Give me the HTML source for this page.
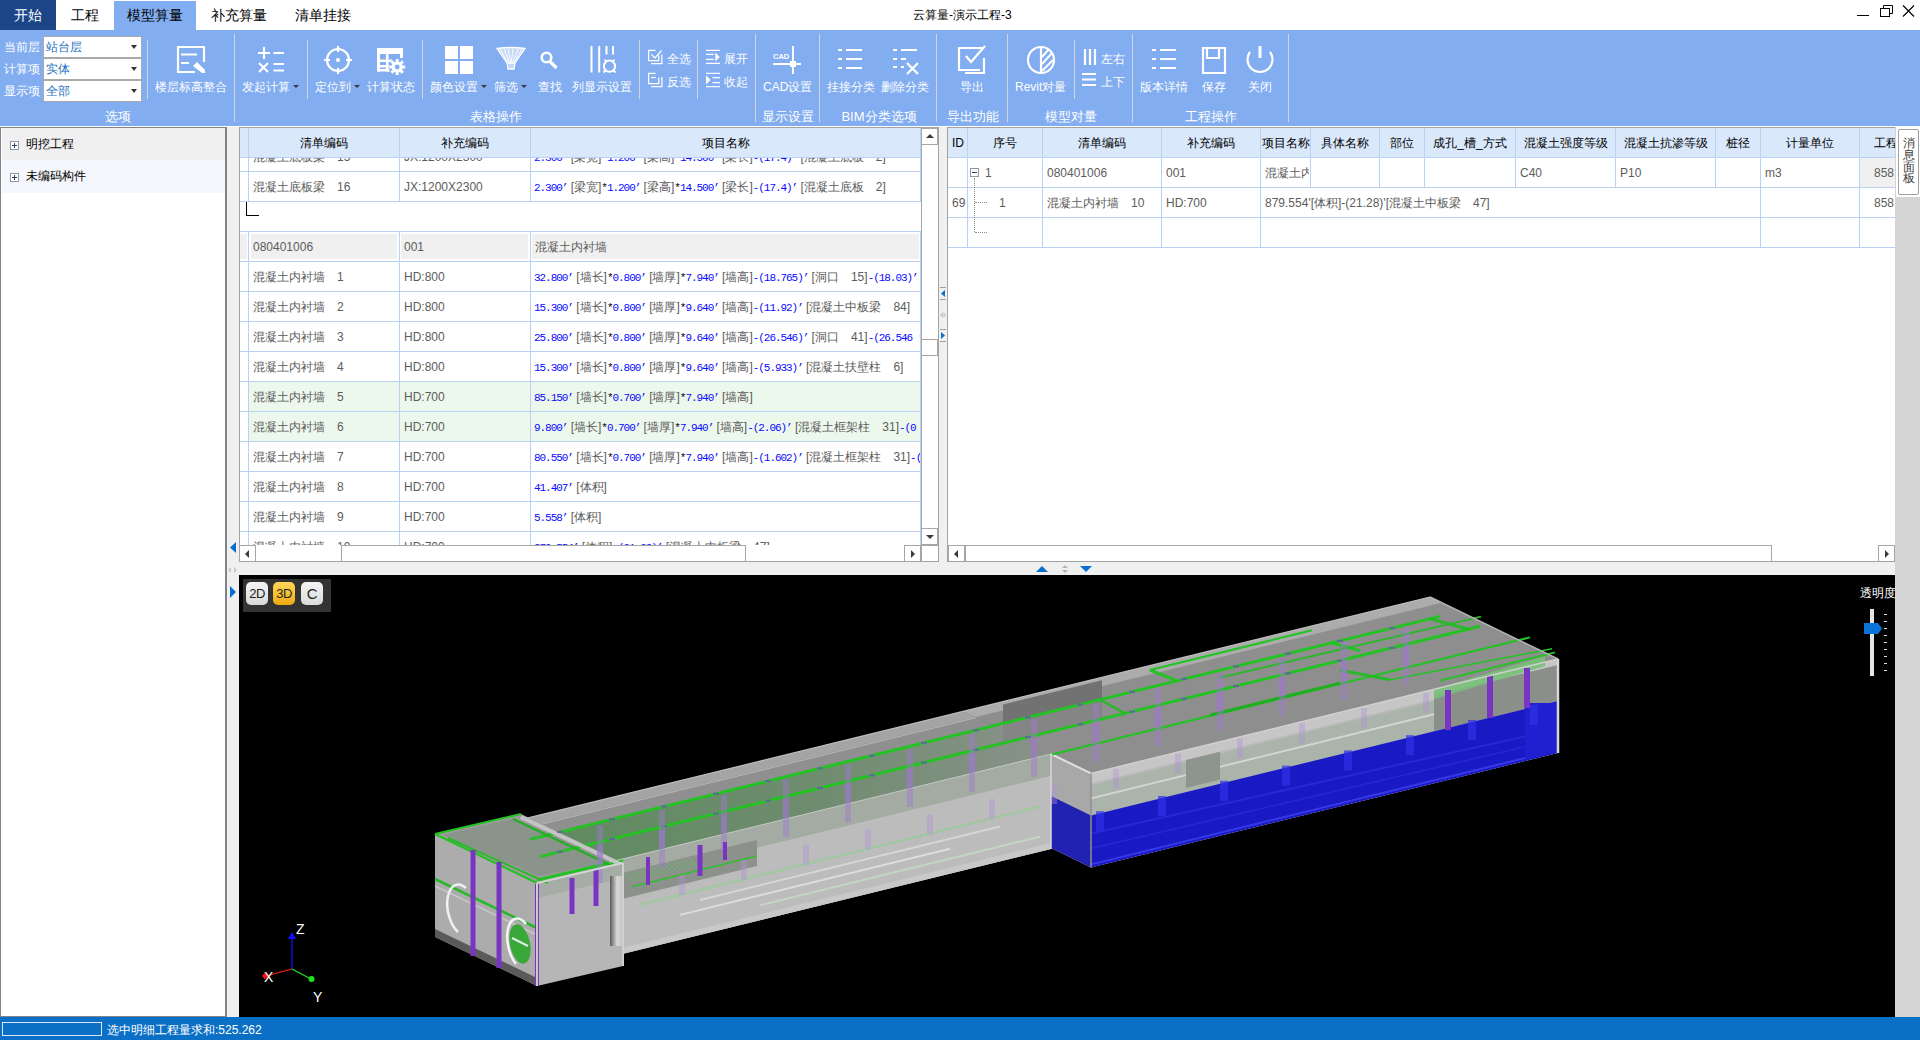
<!DOCTYPE html>
<html><head><meta charset="utf-8">
<style>
*{box-sizing:border-box;margin:0;padding:0}
html,body{width:1920px;height:1040px;overflow:hidden;background:#f0f0f0;font-family:"Liberation Sans",sans-serif;font-size:12px;color:#000}
.a{position:absolute}
.t{position:absolute;white-space:nowrap;line-height:14px}
#tabs{left:0;top:0;width:1920px;height:30px;background:#fff}
#ribbon{left:0;top:30px;width:1920px;height:96px;background:#82adf0}
.wt{color:#fff}
.gsep{position:absolute;width:1px;top:34px;height:88px;background:#d2d6dc}
.ssep{position:absolute;width:1px;top:40px;height:59px;background:#d2d6dc}
.lbl{position:absolute;color:#fff;white-space:nowrap;line-height:14px;top:80px;text-align:center}
.glbl{position:absolute;color:#fff;white-space:nowrap;line-height:14px;top:110px;text-align:center;font-size:13px}
.combo{position:absolute;left:43px;width:99px;height:22px;background:#fff;border:1px solid #a9a9a9;color:#1a6fc0;padding-left:2px;line-height:21px;font-size:12px}
.combo:after{content:"";position:absolute;right:4px;top:8px;border-left:3px solid transparent;border-right:3px solid transparent;border-top:4px solid #333}
.dd{display:inline-block;width:0;height:0;border-left:3px solid transparent;border-right:3px solid transparent;border-top:3px solid #3a3a3a;vertical-align:middle;margin-left:3px;margin-top:-2px}
svg{position:absolute;overflow:visible}

.pbox{position:absolute;width:9px;height:9px;border:1px solid #8f9aa8;background:#fff}
.pbox:before{content:"";position:absolute;left:1px;top:3px;width:5px;height:1px;background:#2d3f5a}
.pbox:after{content:"";position:absolute;left:3px;top:1px;width:1px;height:5px;background:#2d3f5a}
.mbox{position:absolute;width:9px;height:9px;border:1px solid #8f9aa8;background:#fff}
.mbox:before{content:"";position:absolute;left:1px;top:3px;width:5px;height:1px;background:#2d3f5a}

.grid{position:absolute;background:#fff;overflow:hidden}
.hl{position:absolute;height:1px;background:#b9d1f5}
.vl{position:absolute;width:1px;background:#b9d1f5}
.hd{position:absolute;text-align:center;line-height:14px;white-space:nowrap;color:#000}
.ct{margin-top:1px;position:absolute;white-space:nowrap;line-height:14px;color:#5c5c5c}
.fm{margin-top:1px;position:absolute;white-space:nowrap;line-height:14px;color:#5c5c5c;font-size:12px}
.fm b{font-weight:normal;color:#0a0aff;font-family:"Liberation Mono",monospace;font-size:11px;letter-spacing:-1.05px}
.fm i{font-style:normal;color:#000;font-family:"Liberation Mono",monospace;font-size:11px;letter-spacing:-1px}
.sbtn{position:absolute;width:17px;height:17px;background:#fff;border:1px solid #a6a6a6}
.tri-u{position:absolute;left:4px;top:5px;border-left:4px solid transparent;border-right:4px solid transparent;border-bottom:4px solid #3c3c3c}
.tri-d{position:absolute;left:4px;top:6px;border-left:4px solid transparent;border-right:4px solid transparent;border-top:4px solid #3c3c3c}
.tri-l{position:absolute;left:5px;top:4px;border-top:4px solid transparent;border-bottom:4px solid transparent;border-right:4px solid #3c3c3c}
.tri-r{position:absolute;left:6px;top:4px;border-top:4px solid transparent;border-bottom:4px solid transparent;border-left:4px solid #3c3c3c}
</style></head><body>
<!-- TABS -->
<div id="tabs" class="a">
  <div class="a" style="left:0;top:0;width:56px;height:30px;background:#1c4587"></div>
  <div class="t" style="left:14px;top:8px;color:#fff;font-size:14px">开始</div>
  <div class="t" style="left:71px;top:8px;font-size:14px">工程</div>
  <div class="a" style="left:114px;top:1px;width:82px;height:29px;background:#82adf0"></div>
  <div class="t" style="left:127px;top:8px;font-size:14px">模型算量</div>
  <div class="t" style="left:211px;top:8px;font-size:14px">补充算量</div>
  <div class="t" style="left:295px;top:8px;font-size:14px">清单挂接</div>
  <div class="t" style="left:913px;top:8px;font-size:12px">云算量-演示工程-3</div>
</div>

<div id="ribbon" class="a"></div>
<!-- options group -->
<div class="t wt" style="left:4px;top:40px">当前层</div>
<div class="t wt" style="left:4px;top:62px">计算项</div>
<div class="t wt" style="left:4px;top:84px">显示项</div>
<div class="combo" style="top:36px">站台层</div>
<div class="combo" style="top:58px">实体</div>
<div class="combo" style="top:80px">全部</div>
<div class="ssep" style="left:147px"></div>
<svg style="left:0;top:0" width="1" height="1">
 <g fill="none" stroke="#fff" stroke-width="2.2">
  <path d="M204,62 V47 H178 V72 H195"/>
  <path d="M181,54.5 H197 M181,63 H189"/>
 </g>
 <path d="M193,66 L197,62 L205,70 L205,73 L202,73 Z" fill="#fff"/>
</svg>
<div class="lbl" style="left:155px;width:72px">楼层标高整合</div>
<div class="gsep" style="left:234px"></div>
<div class="glbl" style="left:98px;width:40px">选项</div>
<!-- 发起计算 -->
<svg style="left:0;top:0" width="1" height="1">
 <g stroke="#fff" stroke-width="2.2" fill="none">
  <path d="M258,53 H270 M264,47 V59 M273.5,53 H284"/>
  <path d="M259,63 L268,72 M268,63 L259,72 M273.5,64 H284 M273.5,70.5 H284"/>
 </g>
</svg>
<div class="lbl" style="left:242px">发起计算<span class="dd"></span></div>
<div class="ssep" style="left:307px"></div>
<svg style="left:0;top:0" width="1" height="1">
 <g stroke="#fff" stroke-width="2.2" fill="none">
  <circle cx="338" cy="60" r="11"/>
  <path d="M338,46 V52 M338,68 V74 M324,60 H330 M346,60 H352"/>
 </g>
 <circle cx="338" cy="60" r="2" fill="#fff"/>
</svg>
<div class="lbl" style="left:315px">定位到<span class="dd"></span></div>
<svg style="left:0;top:0" width="1" height="1">
 <path d="M377,48 H403 V54 H377 Z" fill="#fff"/>
 <g fill="#fff"><rect x="377" y="54" width="3" height="17.5"/><rect x="377" y="59.5" width="15" height="2.5"/><rect x="377" y="65" width="13" height="2.5"/><rect x="377" y="69" width="15" height="2.5"/><rect x="386" y="54" width="2.5" height="17.5"/><rect x="400" y="54" width="3" height="4"/></g>
 <circle cx="397.2" cy="67" r="8.5" fill="#82adf0"/>
 <g stroke="#fff" stroke-width="3"><path d="M397.2,59 V75 M389.2,67 H405.2 M391.5,61.3 L402.9,72.7 M391.5,72.7 L402.9,61.3"/></g>
 <circle cx="397.2" cy="67" r="5.6" fill="#fff"/>
 <circle cx="397.2" cy="67" r="2.4" fill="#82adf0"/>
</svg>
<div class="lbl" style="left:367px">计算状态</div>
<div class="ssep" style="left:422px"></div>
<!-- 颜色设置 -->
<svg style="left:0;top:0" width="1" height="1">
 <g fill="#fff"><rect x="445" y="46" width="13" height="13"/><rect x="460" y="46" width="13" height="13"/><rect x="445" y="61" width="13" height="13"/><rect x="460" y="61" width="13" height="13"/></g>
 <path d="M497,48.5 Q511,46.5 525,48.5 L515,63 L514,69 L508,69 L507,63 Z" fill="#fff" fill-opacity="0.55"/>
 <path d="M497,48.5 Q511,46.5 525,48.5 L515,63 L514,69 L508,69 L507,63 Z" fill="none" stroke="#fff" stroke-width="1.3"/>
 <g stroke="#fff" stroke-width="0.9" fill="none"><path d="M500,49 L509,64 M504,49 L510,64 M508,49 L511,64 M513,49 L511,64 M518,49 L512,64 M522,49 L513,64"/></g>
 <circle cx="546.5" cy="57.5" r="4.8" fill="none" stroke="#fff" stroke-width="2.6"/>
 <path d="M549.5,61 L556.5,68" stroke="#fff" stroke-width="3.2"/>
 <g stroke="#fff" stroke-width="2"><path d="M591.5,46 V72.6 M599.2,46 V72.6 M606.5,46 V54.5 M613,46 V54.5"/></g>
 <circle cx="609.5" cy="66.2" r="5.6" fill="none" stroke="#fff" stroke-width="2"/>
 <path d="M604.5,59.5 L606.5,62 M614.5,59.5 L612.5,62 M603.5,72.5 L605.5,70.5 M615.5,72.5 L613.5,70.5" stroke="#fff" stroke-width="1.8"/>
</svg>
<div class="lbl" style="left:430px">颜色设置<span class="dd"></span></div>
<div class="lbl" style="left:494px">筛选<span class="dd"></span></div>
<div class="lbl" style="left:538px">查找</div>
<div class="lbl" style="left:572px">列显示设置</div>
<div class="ssep" style="left:639px"></div>
<svg style="left:0;top:0" width="1" height="1">
 <g stroke="#fff" stroke-width="1.25" fill="none">
  <path d="M655.6,50.3 H648.6 V60.6 H658.8 V55.6"/>
  <path d="M651.2,54.4 L655,58 L661.5,50.5"/>
  <path d="M651.2,63.6 H661.9 V54.4"/>
  <path d="M655.6,73.4 H648.6 V83.5 H658.8 V77.5"/>
  <path d="M651.2,77.5 H656"/>
  <path d="M651.2,86.6 H661.9 V77"/>
  <path d="M706,50.3 H720 M706,54.3 H713.8 M706,59.4 H713.8 M706,63.4 H720"/>
  <path d="M706,73.4 H720 M712.5,77.5 H720 M712.5,82.5 H720 M706,86.6 H720"/>
 </g>
 <path d="M715.3,52.5 L719.7,56.9 L715.3,61.6 Z" fill="#fff"/>
 <path d="M706,75.3 L710.6,79.9 L706,84.4 Z" fill="#fff"/>
</svg>
<div class="t wt" style="left:667px;top:52px">全选</div>
<div class="t wt" style="left:667px;top:75px">反选</div>
<div class="ssep" style="left:697px"></div>
<div class="t wt" style="left:724px;top:52px">展开</div>
<div class="t wt" style="left:724px;top:75px">收起</div>
<div class="gsep" style="left:755px"></div>
<div class="glbl" style="left:466px;width:60px">表格操作</div>
<!-- CAD -->
<svg style="left:0;top:0" width="1" height="1">
 <text x="773" y="59" font-family="Liberation Sans" font-weight="bold" font-size="7.5" fill="#fff">CAD</text>
 <path d="M793,46 V74 M773,64 H801" stroke="#fff" stroke-width="2"/>
 <rect x="790" y="61" width="6" height="6" fill="#fff"/>
</svg>
<div class="lbl" style="left:763px">CAD设置</div>
<div class="gsep" style="left:819px"></div>
<div class="glbl" style="left:758px;width:60px">显示设置</div>
<svg style="left:0;top:0" width="1" height="1">
 <g stroke="#fff" stroke-width="2.2">
  <path d="M838,50 H842 M846,50 H862 M838,59 H842 M846,59 H862 M838,68 H842 M846,68 H862"/>
  <path d="M893,50 H897 M901,50 H917 M893,59 H897 M901,59 H906 M893,67 H897 M901,67 H904"/>
  <path d="M907,63 L918,74 M918,63 L907,74"/>
 </g>
</svg>
<div class="lbl" style="left:827px">挂接分类</div>
<div class="lbl" style="left:881px">删除分类</div>
<div class="gsep" style="left:936px"></div>
<div class="glbl" style="left:836px;width:86px">BIM分类选项</div>
<!-- 导出 -->
<svg style="left:0;top:0" width="1" height="1">
 <g stroke="#fff" stroke-width="2.2" fill="none">
  <path d="M983,48 H959 V70 H980"/>
  <path d="M966,56 L971,62 L985,46"/>
  <path d="M984,58 V73 H965"/>
 </g>
</svg>
<div class="lbl" style="left:960px">导出</div>
<div class="gsep" style="left:1007px"></div>
<div class="glbl" style="left:943px;width:60px">导出功能</div>
<svg style="left:0;top:0" width="1" height="1">
 <circle cx="1041" cy="60" r="13" fill="none" stroke="#fff" stroke-width="2.2"/>
 <path d="M1041,47 V73" stroke="#fff" stroke-width="2.2"/>
 <g stroke="#fff" stroke-width="2"><path d="M1042,57 L1049,49 M1042,64 L1052,53 M1042,71 L1053,60"/></g>
 <g stroke="#fff" stroke-width="2.2"><path d="M1085,49 V65 M1090,49 V65 M1095,49 V65 M1082,74 H1096 M1082,79.5 H1096 M1082,85 H1096"/></g>
</svg>
<div class="lbl" style="left:1015px">Revit对量</div>
<div class="ssep" style="left:1074px"></div>
<div class="t wt" style="left:1101px;top:52px">左右</div>
<div class="t wt" style="left:1101px;top:75px">上下</div>
<div class="gsep" style="left:1132px"></div>
<div class="glbl" style="left:1041px;width:60px">模型对量</div>
<svg style="left:0;top:0" width="1" height="1">
 <g stroke="#fff" stroke-width="2.2">
  <path d="M1152,50 H1156 M1160,50 H1176 M1152,59 H1156 M1160,59 H1176 M1152,68 H1156 M1160,68 H1176"/>
 </g>
 <g stroke="#fff" stroke-width="2.2" fill="none">
  <path d="M1203,48 H1225 V73 H1203 Z"/>
  <path d="M1207,48 V58 H1219 V48"/>
 </g>
 <path d="M1250,52 A12.5,12.5 0 1,0 1270,52" fill="none" stroke="#fff" stroke-width="2.2"/>
 <path d="M1260,46 V58" stroke="#fff" stroke-width="3"/>
</svg>
<div class="lbl" style="left:1140px">版本详情</div>
<div class="lbl" style="left:1202px">保存</div>
<div class="lbl" style="left:1248px">关闭</div>
<div class="gsep" style="left:1288px"></div>
<div class="glbl" style="left:1181px;width:60px">工程操作</div>


<!-- window controls -->
<svg style="left:0;top:0" width="1" height="1">
 <path d="M1857,15.5 H1869" stroke="#000" stroke-width="1"/>
 <g fill="none" stroke="#000" stroke-width="1"><rect x="1880.5" y="8.5" width="9" height="8"/><path d="M1883.5,8.5 V5.5 H1892.5 V13.5 H1889.5"/></g>
 <path d="M1903,5.5 L1914,16.5 M1914,5.5 L1903,16.5" stroke="#000" stroke-width="1.1"/>
</svg>
<div class="a" style="left:0;top:126px;width:1920px;height:1px;background:#fff"></div>
<!-- left tree panel -->
<div class="a" style="left:0;top:127px;width:227px;height:890px;background:#fff;border:1px solid #7f848b;border-right-width:2px"></div>
<div class="a" style="left:2px;top:128px;width:223px;height:32px;background:#f0f0f0"></div>
<div class="a" style="left:2px;top:160px;width:223px;height:33px;background:#f5f7fc"></div>
<div class="pbox" style="left:10px;top:141px"></div>
<div class="pbox" style="left:10px;top:173px"></div>
<div class="t" style="left:26px;top:137px">明挖工程</div>
<div class="t" style="left:26px;top:169px">未编码构件</div>
<div class="a" style="left:239px;top:127px;width:700px;height:436px;background:#fff;border:1px solid #a3a3a3"></div>
<div class="grid" style="left:240px;top:128px;width:681px;height:417px">
<div class="ct" style="left:13px;top:21px">混凝土底板梁　15</div>
<div class="ct" style="left:164px;top:21px">JX:1200X2300</div>
<div class="fm" style="left:294px;top:21px"><b>2.300’</b> [梁宽]<i>*</i><b>1.200’</b> [梁高]<i>*</i><b>14.500’</b> [梁长]<b>-(17.4)’</b> [混凝土底板　2]</div>
<div class="hl" style="left:0px;top:43px;width:681px"></div>
<div class="vl" style="left:8px;top:14px;height:29px"></div>
<div class="vl" style="left:159px;top:14px;height:29px"></div>
<div class="vl" style="left:290px;top:14px;height:29px"></div>
<div class="vl" style="left:680px;top:14px;height:29px"></div>
<div class="ct" style="left:13px;top:51px">混凝土底板梁　16</div>
<div class="ct" style="left:164px;top:51px">JX:1200X2300</div>
<div class="fm" style="left:294px;top:51px"><b>2.300’</b> [梁宽]<i>*</i><b>1.200’</b> [梁高]<i>*</i><b>14.500’</b> [梁长]<b>-(17.4)’</b> [混凝土底板　2]</div>
<div class="hl" style="left:0px;top:73px;width:681px"></div>
<div class="vl" style="left:8px;top:44px;height:29px"></div>
<div class="vl" style="left:159px;top:44px;height:29px"></div>
<div class="vl" style="left:290px;top:44px;height:29px"></div>
<div class="vl" style="left:680px;top:44px;height:29px"></div>
<div class="hl" style="left:0px;top:103px;width:681px"></div>
<div class="a" style="left:0px;top:106px;width:7px;height:25px;background:#f0f0f0"></div>
<div class="a" style="left:11px;top:106px;width:146px;height:25px;background:#f0f0f0"></div>
<div class="a" style="left:161px;top:106px;width:127px;height:25px;background:#f0f0f0"></div>
<div class="a" style="left:292px;top:106px;width:387px;height:25px;background:#f0f0f0"></div>
<div class="ct" style="left:13px;top:111px">080401006</div>
<div class="ct" style="left:164px;top:111px">001</div>
<div class="ct" style="left:295px;top:111px">混凝土内衬墙</div>
<div class="hl" style="left:0px;top:133px;width:681px"></div>
<div class="vl" style="left:8px;top:104px;height:29px"></div>
<div class="vl" style="left:159px;top:104px;height:29px"></div>
<div class="vl" style="left:290px;top:104px;height:29px"></div>
<div class="vl" style="left:680px;top:104px;height:29px"></div>
<div class="ct" style="left:13px;top:141px">混凝土内衬墙　1</div>
<div class="ct" style="left:164px;top:141px">HD:800</div>
<div class="fm" style="left:294px;top:141px"><b>32.800’</b> [墙长]<i>*</i><b>0.800’</b> [墙厚]<i>*</i><b>7.940’</b> [墙高]<b>-(18.765)’</b> [洞口　15]<b>-(18.03)’</b> [</div>
<div class="hl" style="left:0px;top:163px;width:681px"></div>
<div class="vl" style="left:8px;top:134px;height:29px"></div>
<div class="vl" style="left:159px;top:134px;height:29px"></div>
<div class="vl" style="left:290px;top:134px;height:29px"></div>
<div class="vl" style="left:680px;top:134px;height:29px"></div>
<div class="ct" style="left:13px;top:171px">混凝土内衬墙　2</div>
<div class="ct" style="left:164px;top:171px">HD:800</div>
<div class="fm" style="left:294px;top:171px"><b>15.300’</b> [墙长]<i>*</i><b>0.800’</b> [墙厚]<i>*</i><b>9.640’</b> [墙高]<b>-(11.92)’</b> [混凝土中板梁　84]</div>
<div class="hl" style="left:0px;top:193px;width:681px"></div>
<div class="vl" style="left:8px;top:164px;height:29px"></div>
<div class="vl" style="left:159px;top:164px;height:29px"></div>
<div class="vl" style="left:290px;top:164px;height:29px"></div>
<div class="vl" style="left:680px;top:164px;height:29px"></div>
<div class="ct" style="left:13px;top:201px">混凝土内衬墙　3</div>
<div class="ct" style="left:164px;top:201px">HD:800</div>
<div class="fm" style="left:294px;top:201px"><b>25.800’</b> [墙长]<i>*</i><b>0.800’</b> [墙厚]<i>*</i><b>9.640’</b> [墙高]<b>-(26.546)’</b> [洞口　41]<b>-(26.546 ’</b></div>
<div class="hl" style="left:0px;top:223px;width:681px"></div>
<div class="vl" style="left:8px;top:194px;height:29px"></div>
<div class="vl" style="left:159px;top:194px;height:29px"></div>
<div class="vl" style="left:290px;top:194px;height:29px"></div>
<div class="vl" style="left:680px;top:194px;height:29px"></div>
<div class="ct" style="left:13px;top:231px">混凝土内衬墙　4</div>
<div class="ct" style="left:164px;top:231px">HD:800</div>
<div class="fm" style="left:294px;top:231px"><b>15.300’</b> [墙长]<i>*</i><b>0.800’</b> [墙厚]<i>*</i><b>9.640’</b> [墙高]<b>-(5.933)’</b> [混凝土扶壁柱　6]</div>
<div class="hl" style="left:0px;top:253px;width:681px"></div>
<div class="vl" style="left:8px;top:224px;height:29px"></div>
<div class="vl" style="left:159px;top:224px;height:29px"></div>
<div class="vl" style="left:290px;top:224px;height:29px"></div>
<div class="vl" style="left:680px;top:224px;height:29px"></div>
<div class="a" style="left:9px;top:254px;width:671px;height:29px;background:#edf8ec"></div>
<div class="ct" style="left:13px;top:261px">混凝土内衬墙　5</div>
<div class="ct" style="left:164px;top:261px">HD:700</div>
<div class="fm" style="left:294px;top:261px"><b>85.150’</b> [墙长]<i>*</i><b>0.700’</b> [墙厚]<i>*</i><b>7.940’</b> [墙高]</div>
<div class="hl" style="left:0px;top:283px;width:681px"></div>
<div class="vl" style="left:8px;top:254px;height:29px"></div>
<div class="vl" style="left:159px;top:254px;height:29px"></div>
<div class="vl" style="left:290px;top:254px;height:29px"></div>
<div class="vl" style="left:680px;top:254px;height:29px"></div>
<div class="a" style="left:9px;top:284px;width:671px;height:29px;background:#edf8ec"></div>
<div class="ct" style="left:13px;top:291px">混凝土内衬墙　6</div>
<div class="ct" style="left:164px;top:291px">HD:700</div>
<div class="fm" style="left:294px;top:291px"><b>9.800’</b> [墙长]<i>*</i><b>0.700’</b> [墙厚]<i>*</i><b>7.940’</b> [墙高]<b>-(2.06)’</b> [混凝土框架柱　31]<b>-(0</b></div>
<div class="hl" style="left:0px;top:313px;width:681px"></div>
<div class="vl" style="left:8px;top:284px;height:29px"></div>
<div class="vl" style="left:159px;top:284px;height:29px"></div>
<div class="vl" style="left:290px;top:284px;height:29px"></div>
<div class="vl" style="left:680px;top:284px;height:29px"></div>
<div class="ct" style="left:13px;top:321px">混凝土内衬墙　7</div>
<div class="ct" style="left:164px;top:321px">HD:700</div>
<div class="fm" style="left:294px;top:321px"><b>80.550’</b> [墙长]<i>*</i><b>0.700’</b> [墙厚]<i>*</i><b>7.940’</b> [墙高]<b>-(1.602)’</b> [混凝土框架柱　31]<b>-(</b></div>
<div class="hl" style="left:0px;top:343px;width:681px"></div>
<div class="vl" style="left:8px;top:314px;height:29px"></div>
<div class="vl" style="left:159px;top:314px;height:29px"></div>
<div class="vl" style="left:290px;top:314px;height:29px"></div>
<div class="vl" style="left:680px;top:314px;height:29px"></div>
<div class="ct" style="left:13px;top:351px">混凝土内衬墙　8</div>
<div class="ct" style="left:164px;top:351px">HD:700</div>
<div class="fm" style="left:294px;top:351px"><b>41.407’</b> [体积]</div>
<div class="hl" style="left:0px;top:373px;width:681px"></div>
<div class="vl" style="left:8px;top:344px;height:29px"></div>
<div class="vl" style="left:159px;top:344px;height:29px"></div>
<div class="vl" style="left:290px;top:344px;height:29px"></div>
<div class="vl" style="left:680px;top:344px;height:29px"></div>
<div class="ct" style="left:13px;top:381px">混凝土内衬墙　9</div>
<div class="ct" style="left:164px;top:381px">HD:700</div>
<div class="fm" style="left:294px;top:381px"><b>5.558’</b> [体积]</div>
<div class="hl" style="left:0px;top:403px;width:681px"></div>
<div class="vl" style="left:8px;top:374px;height:29px"></div>
<div class="vl" style="left:159px;top:374px;height:29px"></div>
<div class="vl" style="left:290px;top:374px;height:29px"></div>
<div class="vl" style="left:680px;top:374px;height:29px"></div>
<div class="ct" style="left:13px;top:411px">混凝土内衬墙　10</div>
<div class="ct" style="left:164px;top:411px">HD:700</div>
<div class="fm" style="left:294px;top:411px"><b>879.554’</b> [体积]<b>-(21.28)’</b> [混凝土中板梁　47]</div>
<div class="hl" style="left:0px;top:433px;width:681px"></div>
<div class="vl" style="left:8px;top:404px;height:29px"></div>
<div class="vl" style="left:159px;top:404px;height:29px"></div>
<div class="vl" style="left:290px;top:404px;height:29px"></div>
<div class="vl" style="left:680px;top:404px;height:29px"></div>
<div class="a" style="left:6px;top:74px;width:13px;height:14px;border-left:1px solid #000;border-bottom:1px solid #000"></div>
</div>
<div class="a" style="left:240px;top:128px;width:681px;height:29px;background:#dae8fb"></div>
<div class="hl" style="left:240px;top:157px;width:681px"></div>
<div class="vl" style="left:248px;top:128px;height:29px"></div>
<div class="vl" style="left:399px;top:128px;height:29px"></div>
<div class="vl" style="left:530px;top:128px;height:29px"></div>
<div class="vl" style="left:920px;top:128px;height:29px"></div>
<div class="hd" style="left:249px;top:136px;width:150px">清单编码</div>
<div class="hd" style="left:400px;top:136px;width:130px">补充编码</div>
<div class="hd" style="left:531px;top:136px;width:389px">项目名称</div>
<div class="sbtn" style="left:921px;top:128px"><div class="tri-u"></div></div>
<div class="sbtn" style="left:921px;top:339px"></div>
<div class="sbtn" style="left:921px;top:528px"><div class="tri-d"></div></div>
<div class="a" style="left:921px;top:128px;width:1px;height:434px;background:#a6a6a6"></div><div class="a" style="left:921px;top:545px;width:17px;height:1px;background:#a6a6a6"></div>
<div class="a" style="left:240px;top:545px;width:681px;height:17px;background:#fff"></div>
<div class="sbtn" style="left:239px;top:545px"><div class="tri-l"></div></div>
<div class="sbtn" style="left:341px;top:545px;width:405px"></div>
<div class="sbtn" style="left:904px;top:545px"><div class="tri-r"></div></div>
<div class="a" style="left:938px;top:127px;width:10px;height:436px;background:#f0f0f0;border-left:1px solid #a3a3a3"></div>
<div class="a" style="left:947px;top:127px;width:949px;height:436px;background:#fff;border:1px solid #a3a3a3"></div>
<svg style="left:0;top:0" width="1" height="1">
 <g stroke="#a0a0a0" stroke-width="1"><path d="M940,287.5 H946 M940,299.5 H946 M940,329.5 H946 M940,341.5 H946"/></g>
 <path d="M941,293.5 L945,290 L945,297 Z" fill="#0a6fd0"/>
 <path d="M941,335.5 L945,332 L945,339 Z" fill="#0a6fd0" transform="translate(1886,0) scale(-1,1)"/>
 <path d="M940,315 L943,312 L943,318 Z M946,315 L943.5,312 L943.5,318 Z" fill="#c8c8c8"/>
</svg>
<div class="grid" style="left:948px;top:128px;width:947px;height:417px">
<div class="a" style="left:0;top:0;width:947px;height:29px;background:#dae8fb"></div>
<div class="hl" style="left:0px;top:29px;width:947px"></div>
<div class="hd" style="left:1px;top:8px;width:18px">ID</div>
<div class="hd" style="left:20px;top:8px;width:74px">序号</div>
<div class="hd" style="left:95px;top:8px;width:118px">清单编码</div>
<div class="hd" style="left:214px;top:8px;width:98px">补充编码</div>
<div class="hd" style="left:313px;top:8px;width:49px">项目名称</div>
<div class="hd" style="left:363px;top:8px;width:68px">具体名称</div>
<div class="hd" style="left:432px;top:8px;width:44px">部位</div>
<div class="hd" style="left:477px;top:8px;width:90px">成孔_槽_方式</div>
<div class="hd" style="left:568px;top:8px;width:99px">混凝土强度等级</div>
<div class="hd" style="left:668px;top:8px;width:99px">混凝土抗渗等级</div>
<div class="hd" style="left:768px;top:8px;width:44px">桩径</div>
<div class="hd" style="left:813px;top:8px;width:98px">计量单位</div>
<div class="hd" style="left:926px;top:8px;text-align:left">工程量</div>
<div class="vl" style="left:19px;top:0px;height:29px"></div>
<div class="vl" style="left:94px;top:0px;height:29px"></div>
<div class="vl" style="left:213px;top:0px;height:29px"></div>
<div class="vl" style="left:312px;top:0px;height:29px"></div>
<div class="vl" style="left:362px;top:0px;height:29px"></div>
<div class="vl" style="left:431px;top:0px;height:29px"></div>
<div class="vl" style="left:476px;top:0px;height:29px"></div>
<div class="vl" style="left:567px;top:0px;height:29px"></div>
<div class="vl" style="left:667px;top:0px;height:29px"></div>
<div class="vl" style="left:767px;top:0px;height:29px"></div>
<div class="vl" style="left:812px;top:0px;height:29px"></div>
<div class="vl" style="left:911px;top:0px;height:29px"></div>
<div class="hl" style="left:0px;top:59px;width:947px"></div>
<div class="vl" style="left:19px;top:30px;height:29px"></div>
<div class="vl" style="left:94px;top:30px;height:29px"></div>
<div class="vl" style="left:213px;top:30px;height:29px"></div>
<div class="vl" style="left:312px;top:30px;height:29px"></div>
<div class="vl" style="left:362px;top:30px;height:29px"></div>
<div class="vl" style="left:431px;top:30px;height:29px"></div>
<div class="vl" style="left:476px;top:30px;height:29px"></div>
<div class="vl" style="left:567px;top:30px;height:29px"></div>
<div class="vl" style="left:667px;top:30px;height:29px"></div>
<div class="vl" style="left:767px;top:30px;height:29px"></div>
<div class="vl" style="left:812px;top:30px;height:29px"></div>
<div class="vl" style="left:911px;top:30px;height:29px"></div>
<div class="a" style="left:912px;top:30px;width:40px;height:29px;background:#f0f0f0"></div>
<div class="mbox" style="left:22px;top:40px"></div>
<div class="ct" style="left:37px;top:37px">1</div>
<div class="ct" style="left:99px;top:37px">080401006</div>
<div class="ct" style="left:218px;top:37px">001</div>
<div class="a" style="left:315px;top:37px;width:46px;height:16px;overflow:hidden"><div class="ct" style="left:2px;top:0">混凝土内衬墙</div></div>
<div class="ct" style="left:572px;top:37px">C40</div>
<div class="ct" style="left:672px;top:37px">P10</div>
<div class="ct" style="left:817px;top:37px">m3</div>
<div class="ct" style="left:926px;top:37px">858</div>
<div class="hl" style="left:0px;top:89px;width:947px"></div>
<div class="vl" style="left:19px;top:60px;height:29px"></div>
<div class="vl" style="left:94px;top:60px;height:29px"></div>
<div class="vl" style="left:213px;top:60px;height:29px"></div>
<div class="vl" style="left:312px;top:60px;height:29px"></div>
<div class="vl" style="left:812px;top:60px;height:29px"></div>
<div class="vl" style="left:911px;top:60px;height:29px"></div>
<div class="ct" style="left:4px;top:67px">69</div>
<div class="ct" style="left:51px;top:67px">1</div>
<div class="ct" style="left:99px;top:67px">混凝土内衬墙　10</div>
<div class="ct" style="left:218px;top:67px">HD:700</div>
<div class="ct" style="left:317px;top:67px">879.554'[体积]-(21.28)'[混凝土中板梁　47]</div>
<div class="ct" style="left:926px;top:67px">858</div>
<div class="hl" style="left:0px;top:119px;width:947px"></div>
<div class="vl" style="left:19px;top:90px;height:29px"></div>
<div class="vl" style="left:94px;top:90px;height:29px"></div>
<div class="vl" style="left:213px;top:90px;height:29px"></div>
<div class="vl" style="left:312px;top:90px;height:29px"></div>
<div class="vl" style="left:812px;top:90px;height:29px"></div>
<div class="vl" style="left:911px;top:90px;height:29px"></div>
<div class="a" style="left:26px;top:50px;width:1px;height:54px;border-left:1px dotted #8a8a8a"></div>
<div class="a" style="left:27px;top:74px;width:12px;height:1px;border-top:1px dotted #8a8a8a"></div>
<div class="a" style="left:27px;top:104px;width:12px;height:1px;border-top:1px dotted #8a8a8a"></div>
</div>
<div class="a" style="left:948px;top:545px;width:947px;height:17px;background:#fff"></div>
<div class="sbtn" style="left:948px;top:545px"><div class="tri-l"></div></div>
<div class="sbtn" style="left:965px;top:545px;width:807px"></div>
<div class="sbtn" style="left:1878px;top:545px"><div class="tri-r"></div></div>
<div class="a" style="left:239px;top:561px;width:700px;height:1px;background:#a3a3a3"></div>
<div class="a" style="left:947px;top:561px;width:949px;height:1px;background:#a3a3a3"></div>
<div class="a" style="left:1895px;top:127px;width:25px;height:890px;background:#d4d4d4"></div>
<div class="a" style="left:1896px;top:127px;width:24px;height:70px;background:#fff"></div>
<div class="a" style="left:1898px;top:129px;width:21px;height:66px;background:#fff;border:1px solid #a0a0a0;border-radius:2px"></div>
<div class="a" style="left:1903px;top:138px;width:14px;line-height:11.8px;font-size:11.5px;color:#3a3a3a">消<br>息<br>面<br>板</div>
<div class="a" style="left:227px;top:127px;width:12px;height:890px;background:#f0f0f0"></div>
<div class="a" style="left:239px;top:562px;width:1656px;height:13px;background:#f0f0f0"></div>
<svg style="left:0;top:0" width="1" height="1">
 <path d="M230,547.5 L236,542 L236,553 Z" fill="#0a6fd0"/>
 <path d="M230,586 L236,592 L230,598 Z" fill="#0a6fd0"/>
 <path d="M228,570 L231,567 L231,573 Z M237,570 L234,567 L234,573 Z" fill="#c8c8c8"/>
 <path d="M1036,572 L1042,566 L1048,572 Z" fill="#0a6fd0"/>
 <path d="M1080,566 L1092,566 L1086,572 Z" fill="#0a6fd0"/>
 <path d="M1062,568 L1065,565 L1068,568 Z M1062,570 L1065,573 L1068,570 Z" fill="#b4b4b4"/>
</svg>
<div class="a" id="vp" style="left:239px;top:575px;width:1656px;height:442px;background:#000;overflow:hidden"></div>
<!--MODEL--><svg style="left:0;top:0" width="1" height="1"><defs><linearGradient id="gtop" x1="521" y1="0" x2="1052" y2="0" gradientUnits="userSpaceOnUse"><stop offset="0" stop-color="#5e8a5e"/><stop offset="0.55" stop-color="#6f8c6f"/><stop offset="1" stop-color="#8a928a"/></linearGradient></defs>
<polygon points="963.0,711.4 1430.0,597.0 1558.0,659.0 1558.0,753.0 1091.0,867.4 963.0,805.4" fill="#6a6a6a"/>
<polygon points="521.0,819.7 963.0,711.4 1051.0,754.0 1051.0,849.0 609.0,957.3 521.0,914.7" fill="#6c6c6c"/>
<polygon points="521.0,819.7 963.0,711.4 1051.0,754.0 609.0,862.3" fill="#8f8f8f"/>
<polygon points="521.0,819.7 963.0,711.4 975.0,717.2 533.0,825.5" fill="#a4a4a4"/>
<line x1="534.0" y1="826.0" x2="976.0" y2="717.7" stroke="#b8b8b8" stroke-width="1"/>
<polygon points="531.0,839.1 1051.0,711.7 1051.0,754.0 609.0,862.3" fill="url(#gtop)"/>
<polygon points="609.0,862.3 1051.0,754.0 1051.0,849.0 609.0,957.3" fill="#bcbcbc"/>
<polygon points="609.0,862.3 1051.0,754.0 1051.0,776.0 609.0,884.3" fill="#a3aba3"/>
<polygon points="609.0,884.3 1051.0,776.0 1051.0,788.0 609.0,896.3" fill="#bcbcbc"/>
<polygon points="609.0,951.3 1051.0,843.0 1051.0,849.0 609.0,957.3" fill="#c8c8c8"/>
<line x1="700.0" y1="900.0" x2="1000.0" y2="826.5" stroke="#d8d8d8" stroke-width="2" stroke-opacity="0.9"/>
<line x1="680.0" y1="914.9" x2="950.0" y2="848.8" stroke="#e0e0e0" stroke-width="2" stroke-opacity="0.9"/>
<line x1="640.0" y1="904.7" x2="1040.0" y2="806.7" stroke="#90d090" stroke-width="2" stroke-opacity="0.7"/>
<line x1="760.0" y1="905.3" x2="1040.0" y2="836.7" stroke="#c8e8c8" stroke-width="2" stroke-opacity="0.6"/>
<polygon points="618.0,874.1 757.0,840.0 757.0,866.0 618.0,900.1" fill="#8c918c"/>
<line x1="625.0" y1="874.4" x2="633.0" y2="882.4" stroke="#50d050" stroke-width="0.8"/>
<line x1="629.0" y1="873.4" x2="637.0" y2="881.4" stroke="#50d050" stroke-width="0.8"/>
<line x1="633.0" y1="872.4" x2="641.0" y2="880.5" stroke="#50d050" stroke-width="0.8"/>
<line x1="637.0" y1="871.4" x2="645.0" y2="879.5" stroke="#50d050" stroke-width="0.8"/>
<line x1="641.0" y1="870.5" x2="649.0" y2="878.5" stroke="#50d050" stroke-width="0.8"/>
<line x1="645.0" y1="869.5" x2="653.0" y2="877.5" stroke="#50d050" stroke-width="0.8"/>
<line x1="649.0" y1="868.5" x2="657.0" y2="876.5" stroke="#50d050" stroke-width="0.8"/>
<line x1="653.0" y1="867.5" x2="661.0" y2="875.6" stroke="#50d050" stroke-width="0.8"/>
<line x1="657.0" y1="866.5" x2="665.0" y2="874.6" stroke="#50d050" stroke-width="0.8"/>
<line x1="661.0" y1="865.6" x2="669.0" y2="873.6" stroke="#50d050" stroke-width="0.8"/>
<line x1="665.0" y1="864.6" x2="673.0" y2="872.6" stroke="#50d050" stroke-width="0.8"/>
<line x1="669.0" y1="863.6" x2="677.0" y2="871.6" stroke="#50d050" stroke-width="0.8"/>
<line x1="673.0" y1="862.6" x2="681.0" y2="870.7" stroke="#50d050" stroke-width="0.8"/>
<line x1="677.0" y1="861.6" x2="685.0" y2="869.7" stroke="#50d050" stroke-width="0.8"/>
<line x1="681.0" y1="860.7" x2="689.0" y2="868.7" stroke="#50d050" stroke-width="0.8"/>
<line x1="685.0" y1="859.7" x2="693.0" y2="867.7" stroke="#50d050" stroke-width="0.8"/>
<line x1="689.0" y1="858.7" x2="697.0" y2="866.7" stroke="#50d050" stroke-width="0.8"/>
<line x1="632.0" y1="886.7" x2="757.0" y2="856.0" stroke="#30c030" stroke-width="1.5"/>
<polygon points="963.0,711.4 1430.0,597.0 1558.0,659.0 1091.0,773.4" fill="#8e8e8e"/>
<polygon points="963.0,711.4 1430.0,597.0 1442.0,602.8 975.0,717.2" fill="#acacac"/>
<polygon points="1003.0,704.5 1102.0,680.3 1102.0,699.2 1003.0,723.5" fill="#727272"/>
<polygon points="1003.0,723.5 1102.0,699.2 1102.0,718.9 1003.0,743.2" fill="#858585"/>
<polygon points="1091.0,773.4 1558.0,659.0 1558.0,753.0 1091.0,867.4" fill="#b8b8b8"/>
<polygon points="1091.0,773.4 1558.0,659.0 1558.0,669.0 1091.0,783.4" fill="#c6c6c6"/>
<polygon points="1434.0,695.3 1558.0,665.0 1558.0,701.0 1434.0,731.3" fill="#8a8f8a"/>
<polygon points="1434.0,689.3 1545.0,656.1 1545.0,666.1 1434.0,699.3" fill="#78c078" fill-opacity="0.9"/>
<polygon points="1091.0,785.4 1434.0,701.3 1434.0,731.3 1091.0,815.4" fill="#aab4aa"/>
<line x1="1091.0" y1="798.4" x2="1434.0" y2="714.3" stroke="#d4d4d4" stroke-width="2"/>
<polygon points="1186.0,760.1 1220.0,751.8 1220.0,779.8 1186.0,788.1" fill="#8e948e"/>
<polygon points="1091.0,815.4 1558.0,701.0 1558.0,753.0 1091.0,867.4" fill="#1a1ac4"/>
<line x1="1091.0" y1="864.4" x2="1558.0" y2="750.0" stroke="#3838e8" stroke-width="2"/>
<line x1="1091.0" y1="833.4" x2="1558.0" y2="729.0" stroke="#2c2cd8" stroke-width="2" stroke-opacity="0.8"/>
<line x1="1091.0" y1="848.4" x2="1558.0" y2="739.0" stroke="#2a2ae0" stroke-width="1.5" stroke-opacity="0.8"/>
<polygon points="1051.0,754.0 1091.0,773.4 1091.0,867.4 1051.0,848.0" fill="#a8a8a8"/>
<polygon points="1051.0,796.0 1091.0,815.4 1091.0,867.4 1051.0,848.0" fill="#2222b0"/>
<line x1="1051.0" y1="754.0" x2="1091.0" y2="773.4" stroke="#e0e0e0" stroke-width="2"/>
<polygon points="1525.0,703.0 1558.0,703.0 1558.0,752.0 1525.0,760.0" fill="#2020d0"/>
<polygon points="435.0,834.0 521.0,814.0 623.0,863.0 537.0,883.0" fill="#9c9c9c"/>
<polygon points="443.0,835.0 515.0,818.0 610.0,862.0 538.0,876.0" fill="#8a948a"/>
<polygon points="435.0,834.0 537.0,883.0 537.0,986.0 435.0,937.0" fill="#acacac"/>
<polygon points="537.0,883.0 623.0,863.0 623.0,966.0 537.0,986.0" fill="#b6b6b6"/>
<polygon points="537.0,883.0 623.0,863.0 623.0,878.0 537.0,898.0" fill="#a6aca6"/>
<polygon points="435.0,929.0 537.0,978.0 537.0,986.0 435.0,937.0" fill="#5a5a5a"/>
<line x1="435.0" y1="879.0" x2="537.0" y2="928.0" stroke="#28b828" stroke-width="2.5"/>
<line x1="435.0" y1="886.0" x2="537.0" y2="935.0" stroke="#c8c8c8" stroke-width="1.5"/>
<path d="M466,888 A12,22 -12 1,0 458,932" fill="none" stroke="#f0f0f0" stroke-width="2.5"/>
<ellipse cx="520" cy="944" rx="10" ry="20" fill="#38a838" transform="rotate(-12 520 944)"/>
<path d="M526,924 A10,20 -12 1,0 516,964" fill="none" stroke="#f4f4f4" stroke-width="2.5"/>
<line x1="512.0" y1="938.0" x2="528.0" y2="946.0" stroke="#e0f0e0" stroke-width="2"/>
<line x1="435.0" y1="834.0" x2="521.0" y2="814.0" stroke="#22c322" stroke-width="2"/>
<line x1="435.0" y1="834.0" x2="537.0" y2="883.0" stroke="#22c322" stroke-width="2"/>
<line x1="537.0" y1="880.0" x2="623.0" y2="860.0" stroke="#22c322" stroke-width="3"/>
<line x1="530.0" y1="839.4" x2="1440.0" y2="616.4" stroke="#22c322" stroke-width="3"/>
<line x1="540.0" y1="856.6" x2="1480.0" y2="626.3" stroke="#22c322" stroke-width="3"/>
<line x1="1052.0" y1="754.5" x2="1530.0" y2="637.4" stroke="#22c322" stroke-width="2"/>
<line x1="1150.0" y1="670.0" x2="1312.0" y2="630.3" stroke="#22c322" stroke-width="2"/>
<line x1="1150.0" y1="670.0" x2="1175.0" y2="679.9" stroke="#22c322" stroke-width="3"/>
<line x1="1330.0" y1="642.6" x2="1360.0" y2="650.6" stroke="#22c322" stroke-width="3"/>
<line x1="1440.0" y1="680.6" x2="1555.0" y2="652.4" stroke="#22c322" stroke-width="2"/>
<line x1="1219.0" y1="677.9" x2="1481.0" y2="616.6" stroke="#2ab82a" stroke-width="2"/>
<line x1="1210.0" y1="715.1" x2="1340.0" y2="683.2" stroke="#1eb01e" stroke-width="3"/>
<line x1="1340.0" y1="670.1" x2="1390.0" y2="679.7" stroke="#2ab82a" stroke-width="3"/>
<line x1="1430.0" y1="618.9" x2="1470.0" y2="629.5" stroke="#2ab82a" stroke-width="3"/>
<line x1="1100.0" y1="699.7" x2="1125.0" y2="713.3" stroke="#2ab82a" stroke-width="2.5"/>
<line x1="1390.0" y1="679.7" x2="1552.0" y2="648.8" stroke="#22c322" stroke-width="1.5"/>
<line x1="521.0" y1="817.0" x2="620.0" y2="864.0" stroke="#c4c4c4" stroke-width="4"/>
<line x1="513.0" y1="819.0" x2="612.0" y2="866.0" stroke="#22b022" stroke-width="2"/>
<line x1="448.0" y1="838.0" x2="548.0" y2="883.0" stroke="#2cb82c" stroke-width="2"/>
<line x1="609.0" y1="862.3" x2="1051.0" y2="754.0" stroke="#c0c8c0" stroke-width="1"/>
<rect x="557.0" y="831.0" width="6" height="2" fill="#7a4ac8" fill-opacity="0.8"/>
<rect x="557.0" y="850.7" width="6" height="2" fill="#7a4ac8" fill-opacity="0.8"/>
<rect x="609.0" y="818.3" width="6" height="2" fill="#7a4ac8" fill-opacity="0.8"/>
<rect x="609.0" y="838.0" width="6" height="2" fill="#7a4ac8" fill-opacity="0.8"/>
<rect x="661.0" y="805.5" width="6" height="2" fill="#7a4ac8" fill-opacity="0.8"/>
<rect x="661.0" y="825.2" width="6" height="2" fill="#7a4ac8" fill-opacity="0.8"/>
<rect x="713.0" y="792.8" width="6" height="2" fill="#7a4ac8" fill-opacity="0.8"/>
<rect x="713.0" y="812.5" width="6" height="2" fill="#7a4ac8" fill-opacity="0.8"/>
<rect x="765.0" y="780.1" width="6" height="2" fill="#7a4ac8" fill-opacity="0.8"/>
<rect x="765.0" y="799.7" width="6" height="2" fill="#7a4ac8" fill-opacity="0.8"/>
<rect x="817.0" y="767.3" width="6" height="2" fill="#7a4ac8" fill-opacity="0.8"/>
<rect x="817.0" y="787.0" width="6" height="2" fill="#7a4ac8" fill-opacity="0.8"/>
<rect x="869.0" y="754.6" width="6" height="2" fill="#7a4ac8" fill-opacity="0.8"/>
<rect x="869.0" y="774.3" width="6" height="2" fill="#7a4ac8" fill-opacity="0.8"/>
<rect x="921.0" y="741.8" width="6" height="2" fill="#7a4ac8" fill-opacity="0.8"/>
<rect x="921.0" y="761.5" width="6" height="2" fill="#7a4ac8" fill-opacity="0.8"/>
<rect x="973.0" y="729.1" width="6" height="2" fill="#7a4ac8" fill-opacity="0.8"/>
<rect x="973.0" y="748.8" width="6" height="2" fill="#7a4ac8" fill-opacity="0.8"/>
<rect x="1025.0" y="716.4" width="6" height="2" fill="#7a4ac8" fill-opacity="0.8"/>
<rect x="1025.0" y="736.0" width="6" height="2" fill="#7a4ac8" fill-opacity="0.8"/>
<rect x="1077.0" y="703.6" width="6" height="2" fill="#7a4ac8" fill-opacity="0.8"/>
<rect x="1077.0" y="723.3" width="6" height="2" fill="#7a4ac8" fill-opacity="0.8"/>
<rect x="1129.0" y="690.9" width="6" height="2" fill="#7a4ac8" fill-opacity="0.8"/>
<rect x="1129.0" y="710.6" width="6" height="2" fill="#7a4ac8" fill-opacity="0.8"/>
<rect x="1181.0" y="678.1" width="6" height="2" fill="#7a4ac8" fill-opacity="0.8"/>
<rect x="1181.0" y="697.8" width="6" height="2" fill="#7a4ac8" fill-opacity="0.8"/>
<rect x="1233.0" y="665.4" width="6" height="2" fill="#7a4ac8" fill-opacity="0.8"/>
<rect x="1233.0" y="685.1" width="6" height="2" fill="#7a4ac8" fill-opacity="0.8"/>
<rect x="1285.0" y="652.7" width="6" height="2" fill="#7a4ac8" fill-opacity="0.8"/>
<rect x="1285.0" y="672.3" width="6" height="2" fill="#7a4ac8" fill-opacity="0.8"/>
<rect x="1337.0" y="639.9" width="6" height="2" fill="#7a4ac8" fill-opacity="0.8"/>
<rect x="1337.0" y="659.6" width="6" height="2" fill="#7a4ac8" fill-opacity="0.8"/>
<rect x="1389.0" y="627.2" width="6" height="2" fill="#7a4ac8" fill-opacity="0.8"/>
<rect x="1389.0" y="646.9" width="6" height="2" fill="#7a4ac8" fill-opacity="0.8"/>
<rect x="597.0" y="825.2" width="6" height="38" fill="#a078d0" fill-opacity="0.45"/>
<rect x="597.0" y="844.9" width="6" height="38" fill="#a078d0" fill-opacity="0.45"/>
<rect x="617.0" y="890.3" width="6" height="20" fill="#b090d8" fill-opacity="0.4"/>
<rect x="659.0" y="810.0" width="6" height="38" fill="#a078d0" fill-opacity="0.45"/>
<rect x="659.0" y="829.7" width="6" height="38" fill="#a078d0" fill-opacity="0.45"/>
<rect x="679.0" y="875.1" width="6" height="20" fill="#b090d8" fill-opacity="0.4"/>
<rect x="721.0" y="794.8" width="6" height="38" fill="#a078d0" fill-opacity="0.45"/>
<rect x="721.0" y="814.5" width="6" height="38" fill="#a078d0" fill-opacity="0.45"/>
<rect x="741.0" y="860.0" width="6" height="20" fill="#b090d8" fill-opacity="0.4"/>
<rect x="783.0" y="779.6" width="6" height="38" fill="#a078d0" fill-opacity="0.45"/>
<rect x="783.0" y="799.3" width="6" height="38" fill="#a078d0" fill-opacity="0.45"/>
<rect x="803.0" y="844.8" width="6" height="20" fill="#b090d8" fill-opacity="0.4"/>
<rect x="845.0" y="764.5" width="6" height="38" fill="#a078d0" fill-opacity="0.45"/>
<rect x="845.0" y="784.1" width="6" height="38" fill="#a078d0" fill-opacity="0.45"/>
<rect x="865.0" y="829.6" width="6" height="20" fill="#b090d8" fill-opacity="0.4"/>
<rect x="907.0" y="749.3" width="6" height="38" fill="#a078d0" fill-opacity="0.45"/>
<rect x="907.0" y="769.0" width="6" height="38" fill="#a078d0" fill-opacity="0.45"/>
<rect x="927.0" y="814.4" width="6" height="20" fill="#b090d8" fill-opacity="0.4"/>
<rect x="969.0" y="734.1" width="6" height="38" fill="#a078d0" fill-opacity="0.45"/>
<rect x="969.0" y="753.8" width="6" height="38" fill="#a078d0" fill-opacity="0.45"/>
<rect x="989.0" y="799.2" width="6" height="20" fill="#b090d8" fill-opacity="0.4"/>
<rect x="1031.0" y="718.9" width="6" height="38" fill="#a078d0" fill-opacity="0.45"/>
<rect x="1031.0" y="738.6" width="6" height="38" fill="#a078d0" fill-opacity="0.45"/>
<rect x="1051.0" y="784.0" width="6" height="20" fill="#b090d8" fill-opacity="0.4"/>
<rect x="1093.0" y="703.7" width="6" height="38" fill="#a078d0" fill-opacity="0.45"/>
<rect x="1093.0" y="723.4" width="6" height="38" fill="#a078d0" fill-opacity="0.45"/>
<rect x="1113.0" y="768.8" width="6" height="20" fill="#b090d8" fill-opacity="0.4"/>
<rect x="1155.0" y="688.5" width="6" height="38" fill="#a078d0" fill-opacity="0.45"/>
<rect x="1155.0" y="708.2" width="6" height="38" fill="#a078d0" fill-opacity="0.45"/>
<rect x="1175.0" y="753.6" width="6" height="20" fill="#b090d8" fill-opacity="0.4"/>
<rect x="1217.0" y="673.3" width="6" height="38" fill="#a078d0" fill-opacity="0.45"/>
<rect x="1217.0" y="693.0" width="6" height="38" fill="#a078d0" fill-opacity="0.45"/>
<rect x="1237.0" y="738.4" width="6" height="20" fill="#b090d8" fill-opacity="0.4"/>
<rect x="1279.0" y="658.1" width="6" height="38" fill="#a078d0" fill-opacity="0.45"/>
<rect x="1279.0" y="677.8" width="6" height="38" fill="#a078d0" fill-opacity="0.45"/>
<rect x="1299.0" y="723.2" width="6" height="20" fill="#b090d8" fill-opacity="0.4"/>
<rect x="1341.0" y="642.9" width="6" height="38" fill="#a078d0" fill-opacity="0.45"/>
<rect x="1341.0" y="662.6" width="6" height="38" fill="#a078d0" fill-opacity="0.45"/>
<rect x="1361.0" y="708.1" width="6" height="20" fill="#b090d8" fill-opacity="0.4"/>
<rect x="1403.0" y="627.8" width="6" height="38" fill="#a078d0" fill-opacity="0.45"/>
<rect x="1403.0" y="647.4" width="6" height="38" fill="#a078d0" fill-opacity="0.45"/>
<rect x="1423.0" y="692.9" width="6" height="20" fill="#b090d8" fill-opacity="0.4"/>
<rect x="1096.0" y="811.2" width="8" height="20" fill="#3030e8" fill-opacity="0.7"/>
<rect x="1158.0" y="796.0" width="8" height="20" fill="#3030e8" fill-opacity="0.7"/>
<rect x="1220.0" y="780.8" width="8" height="20" fill="#3030e8" fill-opacity="0.7"/>
<rect x="1282.0" y="765.6" width="8" height="20" fill="#3030e8" fill-opacity="0.7"/>
<rect x="1344.0" y="750.4" width="8" height="20" fill="#3030e8" fill-opacity="0.7"/>
<rect x="1406.0" y="735.2" width="8" height="20" fill="#3030e8" fill-opacity="0.7"/>
<rect x="1468.0" y="720.0" width="8" height="20" fill="#3030e8" fill-opacity="0.7"/>
<rect x="1530.0" y="704.8" width="8" height="20" fill="#3030e8" fill-opacity="0.7"/>
<rect x="470.5" y="850" width="5" height="106" fill="#7a34c4"/>
<rect x="496.5" y="862" width="5" height="106" fill="#7a34c4"/>
<rect x="535.0" y="884" width="4" height="102" fill="#7a34c4"/>
<rect x="569.5" y="878" width="5" height="36" fill="#7a34c4"/>
<rect x="593.5" y="870" width="5" height="36" fill="#7a34c4"/>
<rect x="646.0" y="857" width="4" height="28" fill="#7a34c4"/>
<rect x="697.5" y="845" width="5" height="31" fill="#7a34c4"/>
<rect x="723.0" y="842" width="4" height="18" fill="#7a34c4"/>
<rect x="1445" y="690" width="6" height="40" fill="#7a34c4"/>
<rect x="1487" y="675" width="6" height="43" fill="#7a34c4"/>
<rect x="1524" y="668" width="6" height="40" fill="#7a34c4"/>
<defs><linearGradient id="gpil" x1="0" x2="1"><stop offset="0" stop-color="#5a5a5a"/><stop offset="0.5" stop-color="#d8d8d8"/><stop offset="1" stop-color="#bdbdbd"/></linearGradient></defs><rect x="610" y="876" width="14" height="70" fill="url(#gpil)"/>
<line x1="537.0" y1="883.0" x2="623.0" y2="863.0" stroke="#d4d4d4" stroke-width="2"/>
<line x1="537.0" y1="883.0" x2="537.0" y2="986.0" stroke="#cccccc" stroke-width="2"/>
<line x1="623.0" y1="863.0" x2="623.0" y2="966.0" stroke="#d0d0d0" stroke-width="2"/>
<line x1="1558.0" y1="659.0" x2="1558.0" y2="753.0" stroke="#d8d8d8" stroke-width="2.5"/>
<line x1="521.0" y1="819.7" x2="1430.0" y2="597.0" stroke="#bcbcbc" stroke-width="1.2"/>
<line x1="1430.0" y1="597.0" x2="1558.0" y2="659.0" stroke="#b4b4b4" stroke-width="1.5"/>
<line x1="1091.0" y1="773.4" x2="1558.0" y2="659.0" stroke="#d0d0d0" stroke-width="1.5"/>
<line x1="1051.0" y1="754.0" x2="1051.0" y2="849.0" stroke="#d8d8d8" stroke-width="1.5"/>
<line x1="1091.0" y1="773.4" x2="1091.0" y2="867.4" stroke="#909090" stroke-width="1.5"/></svg><!--/MODEL-->
<div class="a" style="left:243px;top:579px;width:88px;height:33px;background:#333"></div>
<div style="position:absolute;top:582px;width:22px;height:23px;border-radius:5px;font-size:13px;line-height:23px;text-align:center;color:#222;letter-spacing:-0.5px;left:246px;background:linear-gradient(#f4f4f4,#d8dadc)">2D</div>
<div style="position:absolute;top:582px;width:22px;height:23px;border-radius:5px;font-size:13px;line-height:23px;text-align:center;color:#222;letter-spacing:-0.5px;left:273px;background:linear-gradient(#ffd65a,#f0aa10)">3D</div>
<div style="position:absolute;top:582px;width:22px;height:23px;border-radius:5px;font-size:13px;line-height:23px;text-align:center;color:#222;letter-spacing:-0.5px;left:301px;background:linear-gradient(#f4f4f4,#d8dadc);font-size:15px">C</div>
<div class="t" style="left:1860px;top:586px;color:#fff">透明度</div>
<svg style="left:0;top:0" width="1" height="1">
 <rect x="1870" y="609" width="4" height="67" fill="#e6e6e6"/>
 <path d="M1864,623 H1878 L1882,628.5 L1878,634 H1864 Z" fill="#0a73d8"/>
 <g stroke="#ddd" stroke-width="1"><path d="M1884,614.5 H1887 M1884,621.5 H1887 M1884,628.5 H1887 M1884,635.5 H1887 M1884,642.5 H1887 M1884,649.5 H1887 M1884,656.5 H1887 M1884,663.5 H1887 M1884,670.5 H1887"/></g>
</svg>
<svg style="left:0;top:0" width="1" height="1">
 <path d="M292,969 V938" stroke="#1010ff" stroke-width="1.2"/>
 <path d="M288,939 L292,932 L296,939 Z" fill="#1010ff"/>
 <path d="M292,969 L266,976" stroke="#ff2020" stroke-width="1.2"/>
 <path d="M262,976 L265,972.5 L268.5,976 L265,979.5 Z" fill="#ff1010"/>
 <path d="M292,969 L311,979" stroke="#20e020" stroke-width="1.2"/>
 <circle cx="311.5" cy="979" r="3" fill="#20e020"/>
 <text x="296" y="934" fill="#fff" font-family="Liberation Sans" font-size="14">Z</text>
 <text x="264" y="982" fill="#fff" font-family="Liberation Sans" font-size="14">X</text>
 <text x="313" y="1002" fill="#fff" font-family="Liberation Sans" font-size="14">Y</text>
</svg>
<div class="a" style="left:0;top:1017px;width:1920px;height:23px;background:#0b6fc6"></div>
<div class="a" style="left:2px;top:1022px;width:100px;height:14px;border:1px solid #d8e6f5"></div>
<div class="t" style="left:107px;top:1023px;color:#fff">选中明细工程量求和:525.262</div>
</body></html>
